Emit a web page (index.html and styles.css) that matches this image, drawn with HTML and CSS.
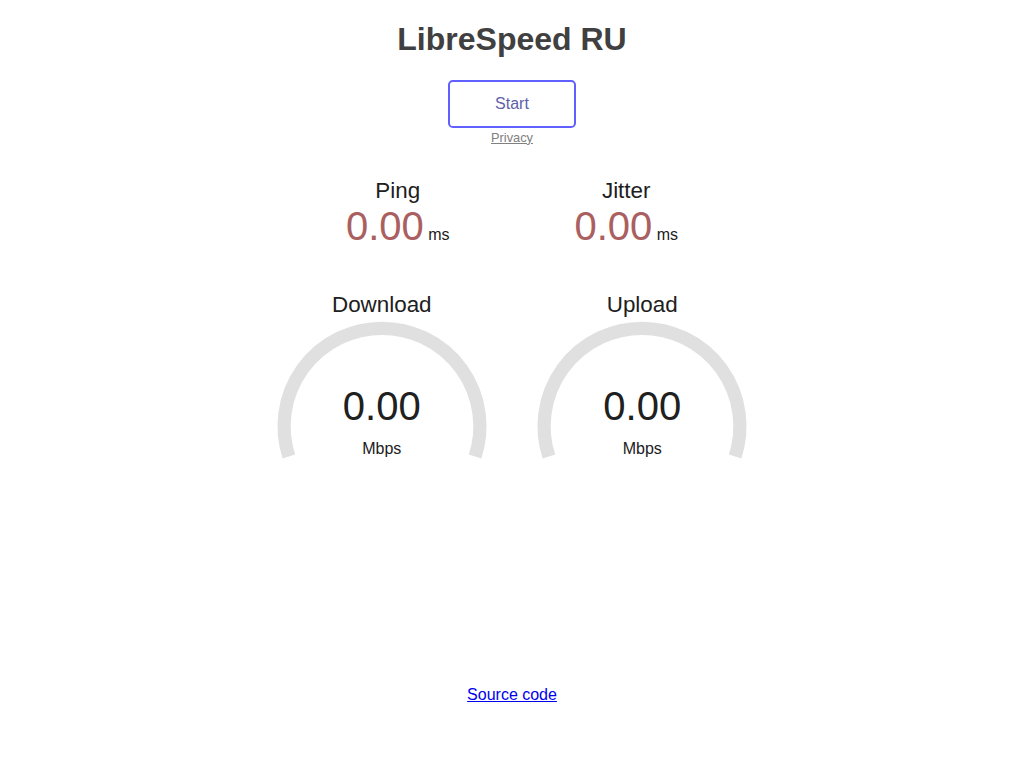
FILE: index.html
```html
<!DOCTYPE html>
<html lang="en">

<head>
    <meta charset="UTF-8">
    <meta name="viewport" content="width=device-width, initial-scale=1.0">
    <title>LibreSpeed RU</title>
    <link rel="stylesheet" href="styles.css">
</head>

<body>
    <h1>LibreSpeed RU</h1>
    <div class="test-wrapper">
        <div class="start-btn">Start</div><br>
        <a class="privacy" href="#">Privacy</a>
        <div class="test">
            <div class="test-group">
                <div class="test-area-small">
                    <div class="test-name">Ping</div>
                    <div class="meter-text meter-text-ping">0.00</div>
                    <div class="unit">ms</div>
                </div>
                <div class="test-area-small">
                    <div class="test-name">Jitter</div>
                    <div class="meter-text meter-text-ping">0.00</div>
                    <div class="unit">ms</div>
                </div>
            </div>
            <div class="test-group">
                <div class="test-area">
                    <svg class="meter" viewBox="0 0 256 200" width="256" height="200">
                        <path d="M34.89 166.45 A97.9 97.9 0 1 1 221.11 166.45" />
                    </svg>
                    <div class="test-name">Download</div>
                    <div class="meter-text">0.00</div>
                    <div class="unit">Mbps</div>
                </div>
                <div class="test-area">
                    <svg class="meter" viewBox="0 0 256 200" width="256" height="200">
                        <path d="M34.89 166.45 A97.9 97.9 0 1 1 221.11 166.45" />
                    </svg>
                    <div class="test-name">Upload</div>
                    <div class="meter-text">0.00</div>
                    <div class="unit">Mbps</div>
                </div>
            </div>
            <div class="ip-area"></div>
        </div>
        <a href="#">Source code</a>
    </div>
</body>

</html>
```

FILE: styles.css
```css
html,
body {
    border: none;
    padding: 0;
    margin: 0;
    background: #FFFFFF;
    color: #202020;
}

body {
    text-align: center;
    font-family: "Liberation Sans", Arial, sans-serif;
}

h1 {
    color: #404040;
    font-size: 2em;
    margin: 0.67em 0;
}

a {
    color: #0000EE;
}

/* Start button */
.start-btn {
    display: inline-block;
    margin: 0 auto;
    color: #6060AA;
    background-color: rgba(0, 0, 0, 0);
    border: 0.15em solid #6060FF;
    border-radius: 0.3em;
    box-sizing: border-box;
    width: 8em;
    height: 3em;
    line-height: 2.7em;
    cursor: pointer;
}

a.privacy {
    font-size: 0.8em;
    color: #808080;
    padding: 0 3em;
}

.test {
    margin-top: 2em;
    margin-bottom: 196px;
}

.test-group {
    display: block;
    margin: 0 auto;
}

/* Ping / Jitter */
.test-area-small {
    display: inline-block;
    width: 14em;
    height: 7em;
    box-sizing: border-box;
    text-align: center;
}

.test-area-small .test-name {
    font-size: 1.4em;
}

.test-area-small .meter-text {
    display: inline-block;
    font-size: 2.5em;
}

.test-area-small .unit {
    display: inline-block;
}

.meter-text-ping {
    color: #AA6060;
}

/* Gauges */
.test-area {
    display: inline-flex;
    flex-direction: column;
    align-items: center;
    vertical-align: baseline;
    width: 16em;
    height: 12.5em;
    position: relative;
    box-sizing: border-box;
}

.test-area .meter {
    position: absolute;
    top: 0;
    left: 0;
    width: 100%;
    height: 100%;
}

.test-area .meter path {
    fill: none;
    stroke: #E0E0E0;
    stroke-width: 13.2;
}

.test-area .test-name {
    position: relative;
    margin-top: 0.1em;
    font-size: 1.4em;
}

.test-area .meter-text {
    position: relative;
    margin-top: 66px;
    font-size: 2.5em;
}

.test-area .unit {
    position: relative;
    margin-top: 11px;
}
```
